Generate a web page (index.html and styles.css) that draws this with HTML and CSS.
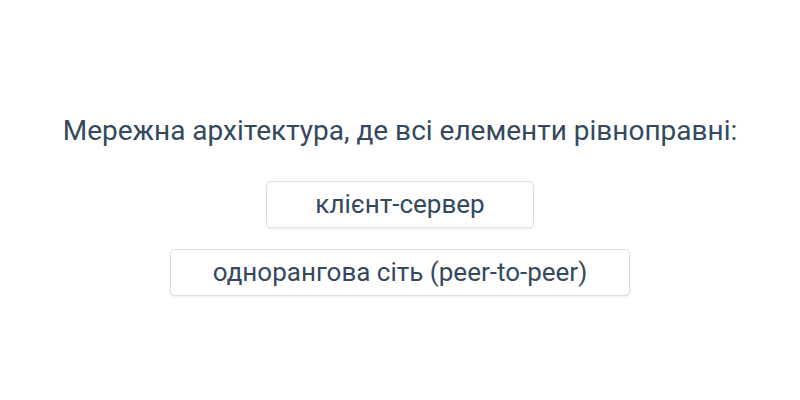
FILE: index.html
```html
<!DOCTYPE html>
<html lang="uk">
<head>
  <meta charset="UTF-8">
  <title>Питання</title>
  <link rel="stylesheet" href="styles.css">
</head>
<body>
  <div class="quiz">
    <h1 class="question">Мережна архітектура, де всі елементи рівноправні:</h1>
    <div class="answers">
      <button class="answer">клієнт-сервер</button>
      <button class="answer">однорангова сіть (peer-to-peer)</button>
    </div>
  </div>
</body>
</html>
```

FILE: styles.css
```css
:root {
  --text: #34495e;
  --border: #dcdfe3;
}

body {
  margin: 0;
  font-family: Roboto, 'Noto Sans', sans-serif;
  background: #ffffff;
  color: var(--text);
}

.quiz {
  height: 400px;
  box-sizing: border-box;
  padding-top: 114px;
  display: flex;
  flex-direction: column;
  align-items: center;
}

.question {
  margin: 0;
  font-size: 28px;
  font-weight: 400;
  line-height: 34px;
  text-align: center;
}

.answers {
  margin-top: 33px;
  display: flex;
  flex-direction: column;
  align-items: center;
  gap: 21px;
}

.answer {
  min-width: 268px;
  font-family: inherit;
  font-size: 26px;
  line-height: 27px;
  color: var(--text);
  background: #fff;
  border: 1px solid var(--border);
  border-radius: 5px;
  padding: 9px 42px;
  box-shadow: 0 1px 2px rgba(0, 0, 0, 0.08);
  cursor: pointer;
}
```
